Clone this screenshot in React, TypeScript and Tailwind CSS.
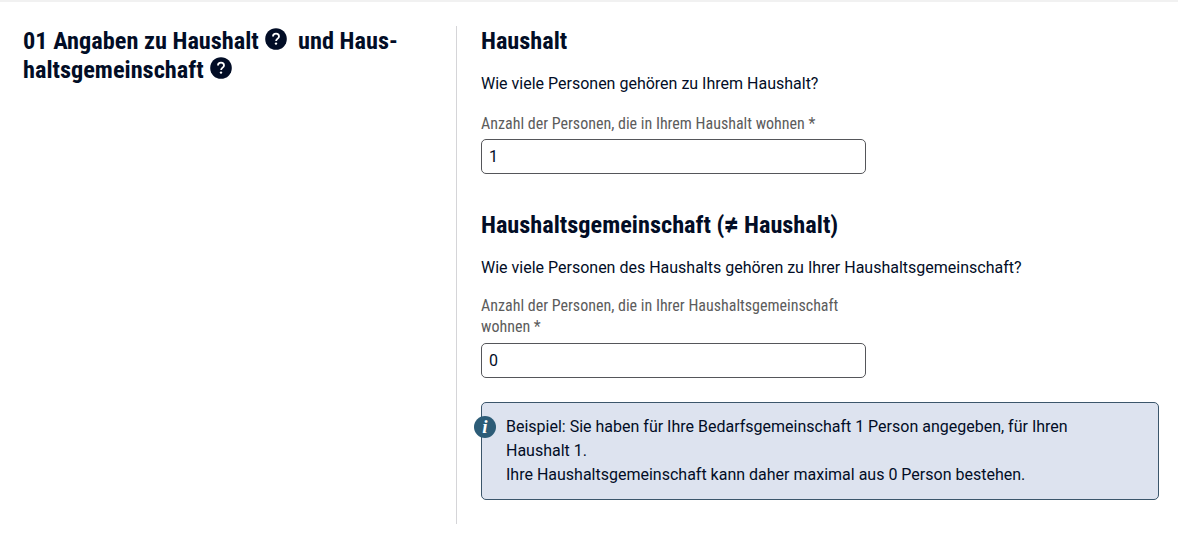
import { useState } from "react";

const condensed = "font-['Roboto_Condensed',Roboto,sans-serif] [font-stretch:75%]";

function HelpIcon() {
  return (
    <svg
      viewBox="0 0 22 22"
      fill="none"
      aria-hidden="true"
      className="ml-px inline-block size-[22px] align-[-1px]"
    >
      <circle cx="11" cy="11" r="10.8" fill="currentColor" />
      <path
        d="M8 8.5C8 6.8 9.3 5.7 11 5.7s3 1.1 3 2.7c0 2.1-2.9 2.4-2.9 4.6"
        stroke="white"
        strokeWidth="1.8"
      />
      <circle cx="11" cy="15.6" r="1.2" fill="white" />
    </svg>
  );
}

function InfoBadge() {
  return (
    <span className="absolute top-[13px] -left-2 flex size-[22px] items-center justify-center rounded-full bg-[#2c5c77] font-['Liberation_Serif',serif] text-[19px] leading-none font-bold text-white italic">
      i
    </span>
  );
}

type NumberFieldProps = {
  id: string;
  label: string;
  initial: string;
};

function NumberField({ id, label, initial }: NumberFieldProps) {
  const [value, setValue] = useState(initial);

  return (
    <div className="w-[385px]">
      <label htmlFor={id} className={`block text-base leading-[21px] text-[#5c5c5c] ${condensed}`}>
        {`${label} *`}
      </label>
      <input
        id={id}
        value={value}
        onChange={(e) => setValue(e.target.value)}
        className="mt-[5.4px] block h-[35px] w-full rounded-[5px] border border-[#55565a] px-[7px] text-base outline-none"
      />
    </div>
  );
}

export default function App() {
  return (
    <main className="h-[544px] border-t-2 border-[#f1f1f1] bg-white pt-6 pr-[19px] pl-[23px] font-[Roboto,sans-serif] text-base leading-6 text-[#020d26]">
      <div className="flex h-[498px]">
        <h2 className={`w-[433px] shrink-0 text-[24.3px] leading-[29px] font-bold ${condensed}`}>
          01 Angaben zu Haushalt <HelpIcon />
          <span className="ml-[5px]"> und Haus-</span>
          <br />
          haltsgemeinschaft <HelpIcon />
        </h2>

        <div className="flex-1 border-l border-[#d5d5d8] pl-6">
          <section>
            <h3 className={`text-[24.3px] leading-[29px] font-bold ${condensed}`}>Haushalt</h3>
            <p className="mt-[17px] mb-[17px]">Wie viele Personen gehören zu Ihrem Haushalt?</p>
            <NumberField
              id="household"
              label="Anzahl der Personen, die in Ihrem Haushalt wohnen"
              initial="1"
            />
          </section>

          <section className="mt-9">
            <h3 className={`text-[24.3px] leading-[29px] font-bold ${condensed}`}>
              Haushaltsgemeinschaft (
              <span className="inline-block w-[14px] scale-y-120 text-center font-['Open_Sans',sans-serif] text-2xl leading-none [font-stretch:100%]">
                ≠
              </span>{" "}
              Haushalt)
            </h3>
            <p className="mt-[17px] mb-[15px]">
              Wie viele Personen des Haushalts gehören zu Ihrer Haushaltsgemeinschaft?
            </p>
            <NumberField
              id="community"
              label="Anzahl der Personen, die in Ihrer Haushaltsgemeinschaft wohnen"
              initial="0"
            />
          </section>

          <div className="relative mt-6 rounded-[5px] border border-[#3b566b] bg-[#dde3ef] py-3 pr-16 pl-6">
            <InfoBadge />
            <p>
              Beispiel: Sie haben für Ihre Bedarfsgemeinschaft 1 Person angegeben, für Ihren
              Haushalt 1.
            </p>
            <p>Ihre Haushaltsgemeinschaft kann daher maximal aus 0 Person bestehen.</p>
          </div>
        </div>
      </div>
    </main>
  );
}
